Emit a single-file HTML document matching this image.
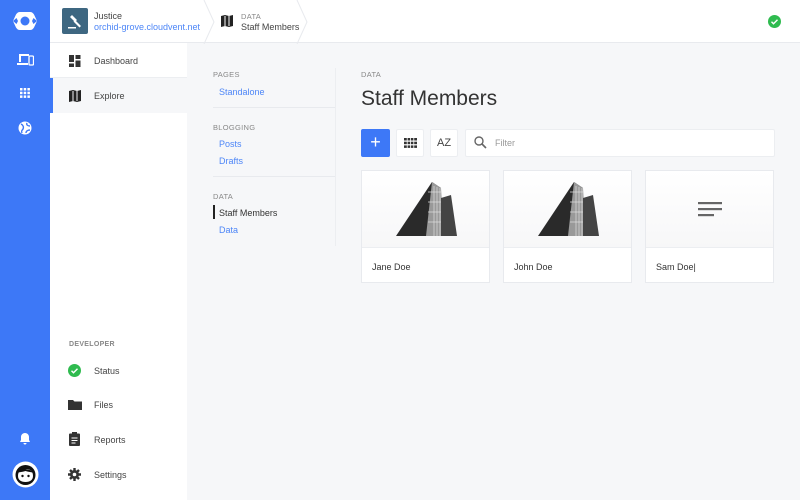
<!DOCTYPE html>
<html><head><meta charset="utf-8"><style>
*{box-sizing:border-box;margin:0;padding:0}
body{width:800px;height:500px;overflow:hidden;background:#f6f7f9;font-family:"Liberation Sans",sans-serif;position:relative;color:#333}
.abs{position:absolute}
.rail{left:0;top:0;width:50px;height:500px;background:#3d78f7}
.side{left:50px;top:43px;width:137px;height:457px;background:#fff}
.hdr{left:50px;top:0;width:750px;height:43px;background:#fff;border-bottom:1px solid #e8eaee}
.t{position:absolute;font-size:9px;white-space:nowrap}
.lbl{font-size:7.5px;color:#888;letter-spacing:.3px}
.lnk{color:#4d86f7}
.card{position:absolute;top:170px;width:129px;height:113px;background:#fff;border:1px solid #e8eaee}
.card .img{height:77px;border-bottom:1px solid #eceef1;background:linear-gradient(#fff,#f7f7f8);position:relative}
.card .nm{position:absolute;left:10px;top:91px;font-size:9px;color:#333}
.btn{position:absolute;top:129px;width:28px;height:28px;background:#fff;border:1px solid #eceef1;border-radius:2px}
</style></head><body>
<div class="abs rail"></div>
<svg class="abs" style="left:12px;top:11px" width="26" height="20" viewBox="0 0 26 20"><path d="M8 1h10c2 0 3 1 4 2.5L25 10l-3 6.5C21 18 20 19 18 19H8c-2 0-3-1-4-2.5L1 10l3-6.5C5 2 6 1 8 1z" fill="#fff"/><circle cx="13" cy="10" r="4.5" fill="#3d78f7"/><path d="M1 10l3.5-3 1.5 3-1.5 3z M25 10l-3.5-3-1.5 3 1.5 3z" fill="#3d78f7"/></svg>
<svg class="abs" style="left:17px;top:53px" width="17" height="13" viewBox="0 0 17 13"><path d="M2 1h10v2H4v6H2z M0 10h11v2H0z" fill="#fff"/><rect x="12" y="3" width="4.5" height="9" rx="1" fill="none" stroke="#fff" stroke-width="1.3"/></svg>
<svg class="abs" style="left:20px;top:88px" width="10" height="10"><g fill="#fff"><rect x="0" y="0" width="2.5" height="2.5"/><rect x="3.7" y="0" width="2.5" height="2.5"/><rect x="7.4" y="0" width="2.5" height="2.5"/><rect x="0" y="3.7" width="2.5" height="2.5"/><rect x="3.7" y="3.7" width="2.5" height="2.5"/><rect x="7.4" y="3.7" width="2.5" height="2.5"/><rect x="0" y="7.4" width="2.5" height="2.5"/><rect x="3.7" y="7.4" width="2.5" height="2.5"/><rect x="7.4" y="7.4" width="2.5" height="2.5"/></g></svg>
<svg class="abs" style="left:18px;top:121px" width="14" height="14" viewBox="0 0 14 14"><circle cx="7" cy="7" r="6.5" fill="#fff"/><path d="M3 3c2 1 3 3 2 5s-2 1-1 4M9 2c-1 2 1 3 3 3M8 12c0-2 2-3 4-3" stroke="#3d78f7" stroke-width="1.4" fill="none"/></svg>
<svg class="abs" style="left:19px;top:432px" width="12" height="13" viewBox="0 0 12 13"><path d="M6 1c-2.5 0-4 2-4 4v3L1 10h10L10 8V5c0-2-1.5-4-4-4z M4.5 11h3a1.5 1.5 0 01-3 0z" fill="#fff"/></svg>
<svg class="abs" style="left:12px;top:461px" width="27" height="27" viewBox="0 0 27 27"><circle cx="13.5" cy="13.5" r="13" fill="#fff"/><circle cx="13.5" cy="14" r="10" fill="#111"/><path d="M6 15c0-5 3-7 7.5-7S21 10 21 15c0 4-3 6-7.5 6S6 19 6 15z" fill="#fff"/><path d="M5 12c2-4 6-5 8.5-4s5 0 8 4c-2-1-5-1-8-2-3 1-6 1-8.5 2z" fill="#111"/><circle cx="10.5" cy="15" r="1.2" fill="#111"/><circle cx="16.5" cy="15" r="1.2" fill="#111"/></svg>

<div class="abs hdr"></div>
<div class="abs" style="left:62px;top:8px;width:26px;height:26px;background:#3e6781;border-radius:2px"></div>
<svg class="abs" style="left:66px;top:12px" width="18" height="18" viewBox="0 0 18 18"><path d="M6 3l5 5-2 2-5-5z M9 8l6 6-1.5 1.5-6-6z M2 15h8v1.5H2z" fill="#fff"/></svg>
<div class="t" style="left:94px;top:11px;color:#444">Justice</div>
<div class="t lnk" style="left:94px;top:22px">orchid-grove.cloudvent.net</div>
<svg class="abs" style="left:203px;top:0" width="12" height="44"><path d="M1 0l10 22L1 44" stroke="#e8eaee" fill="none"/></svg>
<svg class="abs" style="left:296px;top:0" width="12" height="44"><path d="M1 0l10 22L1 44" stroke="#e8eaee" fill="none"/></svg>
<svg class="abs" style="left:221px;top:15px" width="12" height="12" viewBox="0 0 12 12"><path d="M0 1l4-1 4 1 4-1v11l-4 1-4-1-4 1z" fill="#222"/><path d="M4 1v10M8 1v10" stroke="#fff" stroke-width="1"/></svg>
<div class="t lbl" style="left:241px;top:12px">DATA</div>
<div class="t" style="left:241px;top:22px;color:#444">Staff Members</div>
<div class="abs" style="left:768px;top:15px;width:13px;height:13px;border-radius:50%;background:#2fbb4f"></div>
<svg class="abs" style="left:768px;top:15px" width="13" height="13"><path d="M3.5 6.8l2 2 4-4" stroke="#fff" stroke-width="1.4" fill="none"/></svg>

<div class="abs side"></div>
<div class="abs" style="left:50px;top:78px;width:137px;height:35px;background:#f6f7f9"></div>
<div class="abs" style="left:50px;top:78px;width:3px;height:35px;background:#3d78f7"></div>
<div class="abs" style="left:50px;top:77px;width:137px;height:1px;background:#eceef1"></div>
<svg class="abs" style="left:69px;top:55px" width="12" height="12"><rect x="0" y="0" width="5" height="7" fill="#333"/><rect x="6.5" y="0" width="5" height="4" fill="#333"/><rect x="0" y="8.5" width="5" height="3.5" fill="#333"/><rect x="6.5" y="5.5" width="5" height="6.5" fill="#333"/></svg>
<div class="t" style="left:94px;top:56px;color:#444">Dashboard</div>
<svg class="abs" style="left:69px;top:90px" width="12" height="12" viewBox="0 0 12 12"><path d="M0 1l4-1 4 1 4-1v11l-4 1-4-1-4 1z" fill="#222"/><path d="M4 1v10M8 1v10" stroke="#f6f7f9" stroke-width="1"/></svg>
<div class="t" style="left:94px;top:91px;color:#444">Explore</div>
<div class="t lbl" style="left:69px;top:341px;font-weight:bold;font-size:7px">DEVELOPER</div>
<div class="abs" style="left:68px;top:364px;width:13px;height:13px;border-radius:50%;background:#2fbb4f"></div>
<svg class="abs" style="left:68px;top:364px" width="13" height="13"><path d="M3.5 6.8l2 2 4-4" stroke="#fff" stroke-width="1.4" fill="none"/></svg>
<div class="t" style="left:94px;top:366px;color:#444">Status</div>
<svg class="abs" style="left:68px;top:399px" width="14" height="11"><path d="M0 1h5l1.5 1.5H14V11H0z" fill="#333"/></svg>
<div class="t" style="left:94px;top:400px;color:#444">Files</div>
<svg class="abs" style="left:69px;top:432px" width="11" height="14"><rect x="0" y="1.5" width="11" height="12.5" rx="1" fill="#333"/><rect x="3" y="0" width="5" height="3" fill="#333"/><path d="M2.5 6h6M2.5 8.5h6M2.5 11h4" stroke="#fff" stroke-width="1"/></svg>
<div class="t" style="left:94px;top:435px;color:#444">Reports</div>
<svg class="abs" style="left:68px;top:468px" width="13" height="13" viewBox="0 0 13 13"><circle cx="6.5" cy="6.5" r="4.5" fill="#333"/><g stroke="#333" stroke-width="2.4"><path d="M6.5 0v13M0 6.5h13M2 2l9 9M11 2l-9 9"/></g><circle cx="6.5" cy="6.5" r="1.8" fill="#fff"/></svg>
<div class="t" style="left:94px;top:470px;color:#444">Settings</div>

<div class="abs" style="left:335px;top:68px;width:1px;height:178px;background:#eceef1"></div>
<div class="t lbl" style="left:213px;top:70px">PAGES</div>
<div class="t lnk" style="left:219px;top:87px">Standalone</div>
<div class="abs" style="left:213px;top:107px;width:122px;height:1px;background:#e8eaee"></div>
<div class="t lbl" style="left:213px;top:123px">BLOGGING</div>
<div class="t lnk" style="left:219px;top:139px">Posts</div>
<div class="t lnk" style="left:219px;top:156px">Drafts</div>
<div class="abs" style="left:213px;top:176px;width:122px;height:1px;background:#e8eaee"></div>
<div class="t lbl" style="left:213px;top:192px">DATA</div>
<div class="abs" style="left:213px;top:205px;width:2px;height:14px;background:#222"></div>
<div class="t" style="left:219px;top:208px;color:#333">Staff Members</div>
<div class="t lnk" style="left:219px;top:225px">Data</div>

<div class="t lbl" style="left:361px;top:70px">DATA</div>
<div class="t" style="left:361px;top:87px;font-size:21px;color:#333">Staff Members</div>
<div class="abs" style="left:361px;top:129px;width:29px;height:28px;background:#3d78f7;border-radius:2px;color:#fff;font-size:18px;text-align:center;line-height:27px">+</div>
<div class="btn" style="left:396px"></div>
<svg class="abs" style="left:404px;top:138px" width="13" height="10"><g fill="#333"><rect x="0" y="0" width="13" height="2.5"/><rect x="0" y="3.7" width="13" height="2.5"/><rect x="0" y="7.4" width="13" height="2.5"/></g><path d="M3.2 0v10M6.5 0v10M9.8 0v10" stroke="#fff" stroke-width=".8"/></svg>
<div class="btn" style="left:430px"></div>
<div class="t" style="left:437px;top:137px;font-size:11px;color:#444">AZ</div>
<div class="abs" style="left:465px;top:129px;width:310px;height:28px;background:#fff;border:1px solid #eceef1;border-radius:2px"></div>
<svg class="abs" style="left:474px;top:136px" width="13" height="13"><circle cx="5" cy="5" r="4" stroke="#666" stroke-width="1.4" fill="none"/><path d="M8 8l4 4" stroke="#666" stroke-width="1.6"/></svg>
<div class="t" style="left:495px;top:138px;color:#999">Filter</div>

<div class="card" style="left:361px"><div class="img"><svg style="position:absolute;left:34px;top:11px" width="62" height="55" viewBox="0 0 62 55"><path d="M0 54L36 0l9 6v48z" fill="#2a2a2a"/><path d="M36 0l9 6 3 48H30z" fill="#999"/><path d="M45 16l10-3 6 41H45z" fill="#444"/><path d="M38 4v50M41 5v49M44 6v48M32 10h13M32 20h13M32 30h13M32 40h13" stroke="#ddd" stroke-width=".7"/></svg></div><div class="nm">Jane Doe</div></div>
<div class="card" style="left:503px"><div class="img"><svg style="position:absolute;left:34px;top:11px" width="62" height="55" viewBox="0 0 62 55"><path d="M0 54L36 0l9 6v48z" fill="#2a2a2a"/><path d="M36 0l9 6 3 48H30z" fill="#999"/><path d="M45 16l10-3 6 41H45z" fill="#444"/><path d="M38 4v50M41 5v49M44 6v48M32 10h13M32 20h13M32 30h13M32 40h13" stroke="#ddd" stroke-width=".7"/></svg></div><div class="nm">John Doe</div></div>
<div class="card" style="left:645px"><div class="img"><svg style="position:absolute;left:52px;top:31px" width="24" height="16"><g fill="#666"><rect x="0" y="0" width="24" height="2.2"/><rect x="0" y="6" width="24" height="2.2"/><rect x="0" y="12" width="16" height="2.2"/></g></svg></div><div class="nm">Sam Doe|</div></div>
</body></html>
